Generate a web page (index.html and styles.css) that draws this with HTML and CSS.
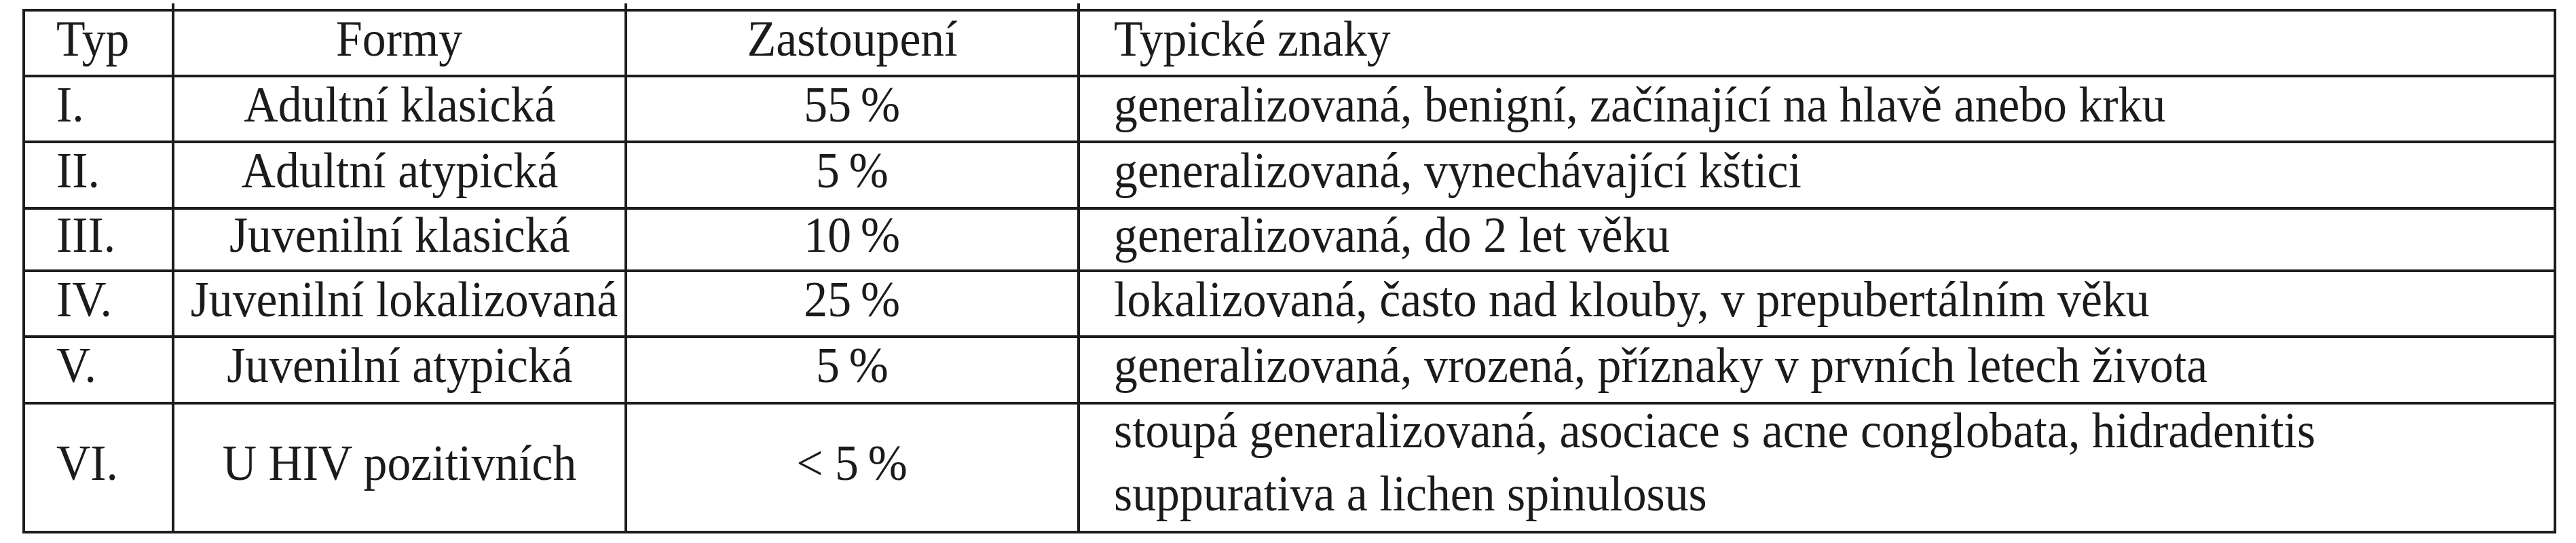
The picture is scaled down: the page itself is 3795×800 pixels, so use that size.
FILE: index.html
```html
<!DOCTYPE html>
<html lang="cs">
<head>
<meta charset="utf-8">
<title>Formy</title>
<link rel="stylesheet" href="styles.css">
</head>
<body>
<table class="forms">
  <colgroup>
    <col class="c-typ">
    <col class="c-forma">
    <col class="c-podil">
    <col class="c-znaky">
  </colgroup>
  <thead>
    <tr class="r97">
      <th class="typ stub-top"><span class="t">Typ</span></th>
      <th class="mid stub-top"><span class="t">Formy</span></th>
      <th class="mid stub-top"><span class="t">Zastoupení</span></th>
      <th class="znaky"><span class="t">Typické znaky</span></th>
    </tr>
  </thead>
  <tbody>
    <tr class="r97">
      <td class="typ"><span class="t">I.</span></td>
      <td class="mid"><span class="t">Adultní klasická</span></td>
      <td class="mid"><span class="t">55&#8201;%</span></td>
      <td class="znaky"><span class="t">generalizovaná, benigní, začínající na hlavě anebo krku</span></td>
    </tr>
    <tr class="r98">
      <td class="typ"><span class="t">II.</span></td>
      <td class="mid"><span class="t">Adultní atypická</span></td>
      <td class="mid"><span class="t">5&#8201;%</span></td>
      <td class="znaky"><span class="t">generalizovaná, vynechávající kštici</span></td>
    </tr>
    <tr class="r92">
      <td class="typ"><span class="t">III.</span></td>
      <td class="mid"><span class="t">Juvenilní klasická</span></td>
      <td class="mid"><span class="t">10&#8201;%</span></td>
      <td class="znaky"><span class="t">generalizovaná, do 2 let věku</span></td>
    </tr>
    <tr class="r97">
      <td class="typ"><span class="t">IV.</span></td>
      <td class="mid"><span class="t">Juvenilní lokalizovaná</span></td>
      <td class="mid"><span class="t">25&#8201;%</span></td>
      <td class="znaky"><span class="t">lokalizovaná, často nad klouby, v prepubertálním věku</span></td>
    </tr>
    <tr class="r98">
      <td class="typ"><span class="t">V.</span></td>
      <td class="mid"><span class="t">Juvenilní atypická</span></td>
      <td class="mid"><span class="t">5&#8201;%</span></td>
      <td class="znaky"><span class="t">generalizovaná, vrozená, příznaky v prvních letech života</span></td>
    </tr>
    <tr class="r190">
      <td class="typ stub-bottom"><span class="t">VI.</span></td>
      <td class="mid stub-bottom"><span class="t">U HIV pozitivních</span></td>
      <td class="mid stub-bottom"><span class="t">&lt; 5&#8201;%</span></td>
      <td class="znaky two-line"><span class="t">stoupá generalizovaná, asociace s acne conglobata, hidradenitis<br>suppurativa a lichen spinulosus</span></td>
    </tr>
  </tbody>
</table>
</body>
</html>
```

FILE: styles.css
```css
html, body {
  margin: 0;
  padding: 0;
  background: #ffffff;
}

.forms {
  border-collapse: collapse;
  table-layout: fixed;
  width: 3729px;
  margin: 13px 0 0 33px;
  font-family: "Liberation Serif", "Times New Roman", serif;
  font-size: 75px;
  color: #1b1b1b;
}

.c-typ { width: 220px; }
.c-forma { width: 667px; }
.c-podil { width: 667px; }
.c-znaky { width: 2175px; }

.forms th,
.forms td {
  border: 4px solid #1c1c1c;
  padding: 0 0 14px 0;
  line-height: 70px;
  vertical-align: middle;
  white-space: nowrap;
  font-weight: normal;
  position: relative;
}

.r97 { height: 97px; }
.r98 { height: 98px; }
.r92 { height: 92px; }
.r190 { height: 190px; }

/* the original typesetting is a slightly condensed Times */
.t {
  display: inline-block;
  transform: scaleX(0.93);
}

.typ {
  text-align: left;
  padding-left: 46px !important;
}

.typ .t,
.znaky .t {
  transform-origin: left center;
}

.mid {
  text-align: center;
}

.mid .t {
  transform-origin: center center;
}

.znaky {
  text-align: left;
  padding-left: 50px !important;
}

.forms .two-line {
  vertical-align: top;
  padding-top: 0;
  padding-bottom: 0;
}

.two-line .t {
  display: block;
  line-height: 93px;
  margin-top: -9px;
}

/* short tick marks of the inner rules above and below the frame */
.stub-top::after,
.stub-bottom::after {
  content: "";
  position: absolute;
  right: -4px;
  width: 4px;
  background: #1c1c1c;
}

.stub-top::after {
  top: -12px;
  height: 10px;
}

.stub-bottom::after {
  bottom: -10px;
  height: 8px;
}
```
